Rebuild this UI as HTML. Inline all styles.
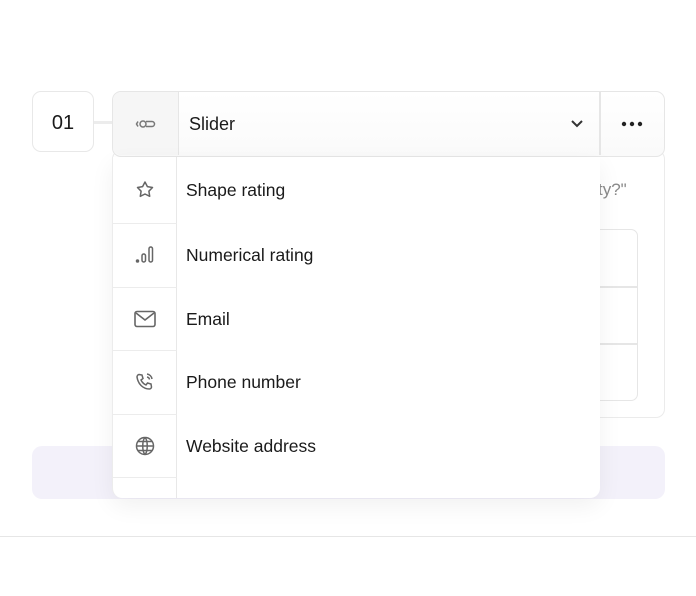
<!DOCTYPE html>
<html><head><style>
*{box-sizing:border-box;margin:0;padding:0}
body{width:696px;height:596px;background:#fff;font-family:"Liberation Sans",sans-serif;position:relative;overflow:hidden;color:#1a1a1a}
.abs{position:absolute}
.num{left:32px;top:91px;width:62px;height:61px;border:1.5px solid #e8e8e8;border-radius:9px;font-size:20px;display:flex;align-items:center;justify-content:center;padding-top:3px}
.hdr{left:112px;top:91px;width:553px;height:66px;border:1.5px solid #e6e6e6;border-radius:9px;background:linear-gradient(#fff,#fafafa)}
.card{left:112px;top:150px;width:553px;height:268px;border:1.5px solid #ebebeb;border-radius:9px}
.purple{left:32px;top:446px;width:633px;height:53px;background:#f3f1fa;border-radius:10px}
.dd{left:112px;top:157px;width:488px;height:341px;background:#fff;border-radius:0 0 10px 10px;box-shadow:0 8px 24px rgba(0,0,0,.06);border-left:1.5px solid #ececec;overflow:hidden}
.row{position:absolute;left:0;width:488px;height:63.5px;display:flex;align-items:center}
.ic{width:64px;height:100%;border-right:1.5px solid #e8e8e8;border-bottom:1.5px solid #ececec;display:flex;align-items:center;justify-content:center}
.lbl{padding-left:9px;font-size:17.5px;color:#1a1a1a}
</style></head><body>
<div class="abs" style="left:0;top:536px;width:696px;height:1px;background:#e6e6e6"></div>
<div class="abs card"></div>
<div class="abs" style="left:598px;top:180px;font-size:17px;color:#8a8a8a">ty?"</div>
<div class="abs" style="left:560px;top:229px;width:78px;height:172px;border:1.5px solid #e6e6e6;border-radius:7px"></div>
<div class="abs" style="left:560px;top:286px;width:78px;height:1.5px;background:#e6e6e6"></div>
<div class="abs" style="left:560px;top:343px;width:78px;height:1.5px;background:#e6e6e6"></div>
<div class="abs purple"></div>
<div class="abs num">01</div>
<div class="abs" style="left:94px;top:121px;width:18px;height:3px;background:#ececec"></div>
<div class="abs hdr">
 <div class="abs" style="left:0;top:0;width:66px;height:63px;background:#f6f6f6;border-right:1.5px solid #e6e6e6;border-radius:8px 0 0 8px;display:flex;align-items:center;justify-content:center">
  <svg width="22" height="12" viewBox="0 0 22 12" fill="none" stroke="#777" stroke-width="1.5"><path d="M3 3.5 L1.5 6 L3 8.5"/><circle cx="8" cy="6" r="3"/><path d="M11 3.5h6a2.5 2.5 0 0 1 0 5h-6"/></svg>
 </div>
 <div class="abs" style="left:76px;top:22px;font-size:18px">Slider</div>
 <svg class="abs" style="left:457px;top:27px" width="14" height="10" viewBox="0 0 14 10" fill="none" stroke="#333" stroke-width="2"><path d="M2 2l5 5 5-5"/></svg>
 <div class="abs" style="left:486px;top:0;width:1.5px;height:63px;background:#e6e6e6"></div>
 <svg class="abs" style="left:508px;top:29px" width="22" height="6"><circle cx="3" cy="3" r="2.2" fill="#222"/><circle cx="11" cy="3" r="2.2" fill="#222"/><circle cx="19" cy="3" r="2.2" fill="#222"/></svg>
</div>
<div class="abs dd">
 <div class="row" style="top:0;height:67px"><div class="ic"><svg width="22" height="22" viewBox="0 0 22 22" fill="none" stroke="#666" stroke-width="1.5" stroke-linejoin="round"><path d="M11 3l2.4 4.6 5.1.9-3.6 3.7.8 5.1L11 15l-4.7 2.3.8-5.1L3.5 8.5l5.1-.9z"/></svg></div><div class="lbl">Shape rating</div></div>
 <div class="row" style="top:67px"><div class="ic"><svg width="22" height="22" viewBox="0 0 22 22" fill="none" stroke="#666" stroke-width="1.5"><circle cx="3.5" cy="17" r="1" fill="#666"/><rect x="8" y="10" width="3.5" height="8" rx="1.7"/><rect x="15" y="3" width="3.5" height="15" rx="1.7"/></svg></div><div class="lbl">Numerical rating</div></div>
 <div class="row" style="top:130.5px"><div class="ic"><svg width="24" height="20" viewBox="0 0 24 20" fill="none" stroke="#666" stroke-width="1.6"><rect x="2" y="2.5" width="20" height="15" rx="2"/><path d="M3 4l9 7 9-7"/></svg></div><div class="lbl">Email</div></div>
 <div class="row" style="top:194px"><div class="ic"><svg width="22" height="22" viewBox="0 0 22 22" fill="none" stroke="#666" stroke-width="1.5"><path d="M5 3.5l3 .5 1 3.5-2 1.5a10 10 0 0 0 5 5l1.5-2 3.5 1 .5 3c0 1-1 2-2 2C9 18 4 13 3 6c0-1.2 1-2.5 2-2.5z"/><path d="M13 3a6 6 0 0 1 5 5M13 6a3 3 0 0 1 2.5 2.5"/></svg></div><div class="lbl">Phone number</div></div>
 <div class="row" style="top:257.5px"><div class="ic"><svg width="22" height="22" viewBox="0 0 22 22" fill="none" stroke="#666" stroke-width="1.5"><circle cx="11" cy="11" r="8.5"/><path d="M2.5 11h17M11 2.5c-3 3-3 14 0 17M11 2.5c3 3 3 14 0 17M4 6.5h14M4 15.5h14"/></svg></div><div class="lbl">Website address</div></div>
 <div class="row" style="top:321px"><div class="ic" style="border-bottom:none"></div></div>
</div>
</body></html>
